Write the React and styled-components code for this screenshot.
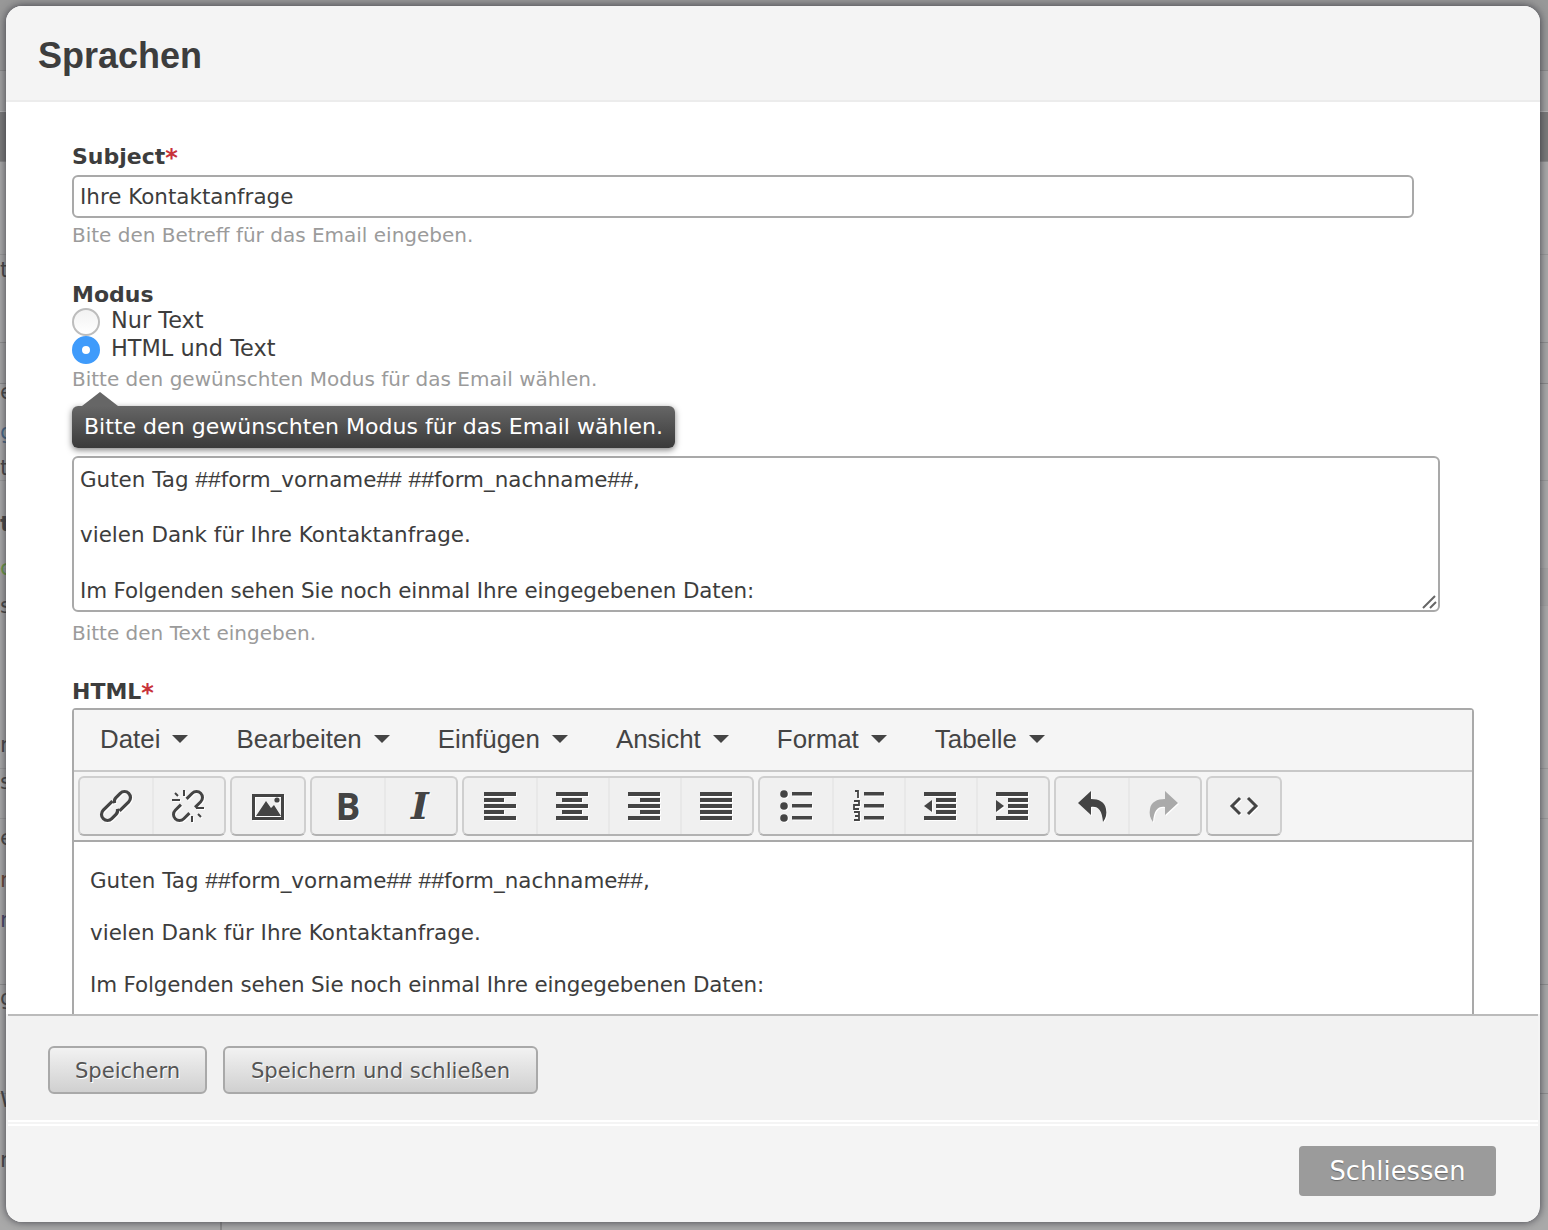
import React from "react";
import styled, { createGlobalStyle } from "styled-components";

const Global = createGlobalStyle`
  html, body { margin: 0; padding: 0; height: 100%; overflow: hidden; }
  body { font-family: "DejaVu Sans", sans-serif; color: #3d3d3d; }
  * { box-sizing: border-box; }
`;

const Page = styled.div`
  position: relative;
  height: 1230px;
  overflow: hidden;
  background: #a9a9a9;
`;
const Bands = styled.div`
  display: flex;
  flex-direction: column;
  height: 100%;
`;
const Band = styled.div`
  flex: none;
  height: ${(p) => p.$h}px;
  background: ${(p) => p.$bg};
  border-bottom: 1px solid ${(p) => p.$line || "transparent"};
`;
const Fragments = styled.div`
  position: absolute;
  left: 0;
  top: 0;
  width: 6px;
  overflow: hidden;
  display: flex;
  flex-direction: column;
`;
const Fragment = styled.div`
  height: ${(p) => p.$h}px;
  font-size: 22px;
  line-height: 28px;
  font-weight: ${(p) => (p.$bold ? 700 : 400)};
  color: ${(p) => p.$c || "#4a4a4a"};
  white-space: nowrap;
`;
const ColumnRule = styled.div`
  position: absolute;
  left: 220px;
  bottom: 0;
  width: 2px;
  height: 10px;
  background: #8a8a8a;
`;

const Modal = styled.div`
  position: absolute;
  left: 6px;
  top: 6px;
  width: 1534px;
  height: 1216px;
  display: flex;
  flex-direction: column;
  background: #f4f4f4;
  border-radius: 16px;
  overflow: hidden;
  box-shadow: 0 0 9px rgba(30, 30, 40, 0.75);
`;
const Header = styled.header`
  flex: none;
  height: 96px;
  padding: 0 32px;
  display: flex;
  align-items: center;
  background: #f4f4f4;
  border-bottom: 2px solid #ececec;
`;
const Title = styled.h1`
  margin: 6px 0 0;
  font: 700 36px/44px "Liberation Sans", Arial, sans-serif;
  color: #3d3d3d;
`;
const Body = styled.main`
  flex: none;
  height: 912px;
  overflow: hidden;
  background: #fff;
  padding: 41px 66px 0;
`;
const Field = styled.div`
  position: relative;
  margin-bottom: ${(p) => p.$mb ?? 32}px;
`;
const Label = styled.label`
  display: block;
  height: 28px;
  font-size: 22px;
  font-weight: 700;
  line-height: 28px;
  margin-bottom: ${(p) => p.$mb ?? 4}px;
  color: #3d3d3d;
`;
const Star = styled.span`
  font-size: 24px;
  line-height: 20px;
  vertical-align: -2px;
  color: #c8323a;
`;
const TextInput = styled.input`
  display: block;
  width: 1342px;
  height: 43px;
  padding: 0 6px;
  border: 2px solid #a9a9a9;
  border-radius: 6px;
  background: #fff;
  outline: none;
  font: 21.45px "DejaVu Sans", sans-serif;
  color: #3d3d3d;
`;
const Help = styled.div`
  height: 28px;
  margin-top: ${(p) => p.$mt ?? 3}px;
  font-size: 20px;
  line-height: 28px;
  color: #9b9b9b;
  white-space: nowrap;
`;
const RadioList = styled.div`
  margin-top: -1px;
`;
const RadioRow = styled.label`
  display: flex;
  align-items: center;
  gap: 11px;
  height: 28px;
  font-size: 22.4px;
  color: #3d3d3d;
`;
const RadioText = styled.span`
  margin-top: -4px;
`;
const RadioInput = styled.input`
  appearance: none;
  flex: none;
  width: 28px;
  height: 28px;
  margin: 0;
  border-radius: 50%;
  border: 2px solid #bdbdbd;
  background: linear-gradient(#f2f2f2, #fff);
  &:checked {
    border: 10px solid #3f9bfb;
    background: #fff;
  }
`;
const Tooltip = styled.div`
  position: absolute;
  z-index: 2;
  left: 0;
  top: 125px;
  height: 42px;
  padding: 0 12px 2px;
  display: flex;
  align-items: center;
  font-size: 22.06px;
  color: #fff;
  white-space: nowrap;
  border-radius: 6px;
  background: linear-gradient(#666, #3a3a3a);
  box-shadow: 0 2px 6px rgba(0, 0, 0, 0.5);
  &::before {
    content: "";
    position: absolute;
    left: 10px;
    top: -14px;
    border-left: 18px solid transparent;
    border-right: 18px solid transparent;
    border-bottom: 14px solid #666;
  }
`;
const TextBox = styled.div`
  position: relative;
  width: 1368px;
  height: 156px;
  padding: 7px 6px 0;
  border: 2px solid #a9a9a9;
  border-radius: 6px;
  overflow: hidden;
  font-size: 21.45px;
  line-height: 28px;
  color: #3d3d3d;
`;
const TextLine = styled.div`
  height: 28px;
  white-space: nowrap;
`;
const Hash = styled.span`
  font-family: "Liberation Sans", sans-serif;
  font-size: 22.8px;
`;
const Tight = styled.span`
  letter-spacing: -0.14px;
`;
const Grip = styled.svg`
  position: absolute;
  right: 1px;
  bottom: 1px;
  width: 16px;
  height: 16px;
  fill: none;
  stroke: #666;
  stroke-width: 2;
`;
const Editor = styled.div`
  width: 1402px;
  border: 2px solid #a9a9a9;
  border-radius: 4px;
  background: #fff;
`;
const MenuBar = styled.div`
  height: 62px;
  padding: 0 0 2px 26px;
  display: flex;
  align-items: center;
  gap: 48px;
  background: #f5f5f5;
  border-bottom: 2px solid #c8c8c8;
`;
const MenuItem = styled.div`
  display: flex;
  align-items: center;
  gap: 12px;
  font: 25.9px/32px "Liberation Sans", Arial, sans-serif;
  color: #444;
`;
const Caret = styled.span`
  width: 0;
  height: 0;
  border-left: 8px solid transparent;
  border-right: 8px solid transparent;
  border-top: 8px solid #444;
`;
const ToolBar = styled.div`
  height: 70px;
  padding: 4px 4px 0;
  display: flex;
  gap: 4px;
  background: #f5f5f5;
  border-bottom: 2px solid #a9a9a9;
`;
const Group = styled.div`
  display: flex;
  height: 60px;
  border: 2px solid #cfcfcf;
  border-bottom-color: #b2b2b2;
  border-radius: 6px;
  background: #f0f0f0;
`;
const ToolButton = styled.div`
  width: 72px;
  display: flex;
  align-items: center;
  justify-content: center;
  & + & {
    box-shadow: inset 2px 0 0 #e8e8e8;
  }
`;
const Icon = styled.svg`
  width: 32px;
  height: 32px;
  overflow: visible;
  fill: ${(p) => p.$c || "#444"};
  filter: drop-shadow(1px 1px 0 #fff);
`;
const BoldGlyph = styled.span`
  font: 700 37px/32px "Open Sans", "Liberation Sans", sans-serif;
  color: #444;
  text-shadow: 1px 1px 0 #fff;
`;
const ItalicGlyph = styled.span`
  font: italic 700 38px/32px "DejaVu Serif", serif;
  color: #444;
  text-shadow: 1px 1px 0 #fff;
`;
const Content = styled.div`
  min-height: 400px;
  padding: 24px 16px 0;
  font-size: 21.45px;
  line-height: 28px;
  color: #3d3d3d;
`;
const Para = styled.p`
  margin: 0 0 24px;
`;
const FormBar = styled.div`
  flex: none;
  height: 108px;
  margin: 0 2px 2px;
  padding: 30px 40px 0;
  display: flex;
  align-items: flex-start;
  gap: 16px;
  background: #f2f2f2;
  border-top: 2px solid #bbb;
  border-bottom: 2px solid #fff;
`;
const FormButton = styled.button`
  width: ${(p) => p.$w}px;
  height: 48px;
  padding: 0;
  border: 2px solid #a9a9a9;
  border-radius: 6px;
  background: linear-gradient(#f2f2f2, #d0d0d0);
  font: 21.1px "DejaVu Sans", sans-serif;
  color: #555;
  text-shadow: 1px 1px 0 #fff;
`;
const Footer = styled.footer`
  flex: 1;
  margin: 0 2px;
  padding: 20px 42px 0 0;
  display: flex;
  justify-content: flex-end;
  align-items: flex-start;
  background: #f4f4f4;
  border-top: 2px solid #fff;
`;
const CloseButton = styled.button`
  width: 197px;
  height: 50px;
  border: 0;
  border-radius: 4px;
  background: #9b9b9b;
  font: 25.75px "DejaVu Sans", sans-serif;
  color: #fff;
  text-shadow: 0 1px 1px rgba(0, 0, 0, 0.35);
`;

const bands = [
  [71, "#989898", "#8a8a8a"],
  [41, "#a2a2a2", "#b5b5b5"],
  [50, "#7b7b7b", "#8b8b8b"],
  [93, "#a9a9a9", "#999"],
  [88, "#a9a9a9", "#8f8f8f"],
  [41, "#a6a6a6", "#8a8a8a"],
  [97, "#a9a9a9", "#999"],
  [88, "#a9a9a9", "#a0a0a0"],
  [37, "#a3a3a3", "#a0a0a0"],
  [163, "#a9a9a9", "#999"],
  [50, "#a9a9a9", "#999"],
  [166, "#a9a9a9", "#8f8f8f"],
  [109, "#a9a9a9", "#8f8f8f"],
  [126, "#a9a9a9"],
];

const fragments = [
  [256, ""],
  [122, "t"],
  [40, "e"],
  [36, "g", "#4a6a8a"],
  [56, "t"],
  [44, "t", null, true],
  [38, "c", "#6d9a4a"],
  [139, "s"],
  [37, "r"],
  [56, "s"],
  [42, "e"],
  [40, "r", "#6a4a3a"],
  [78, "r", "#4a4a6a"],
  [102, "g"],
  [60, "W"],
  [28, "n"],
];

const barPath = (rows) =>
  rows.map(([x, y, w, h = 4]) => `M${x} ${y}h${w}v${h}h-${w}z`).join("");

const ys = [2, 8, 14, 20, 26];
const alignIcon = (xs) => barPath(ys.map((y, i) => [xs[i % 2][0], y, xs[i % 2][1]]));

const LinkIcon = () => (
  <Icon viewBox="0 0 32 32">
    <g transform="rotate(-45 16 16)" fill="none" stroke="#444" strokeWidth="3.2">
      <path d="M17 10H4a6 6 0 0 0 0 12h6a6 6 0 0 0 5-3" />
      <path d="M15 22H28a6 6 0 0 0 0-12h-6a6 6 0 0 0-5 3" />
    </g>
  </Icon>
);
const UnlinkIcon = () => (
  <Icon viewBox="0 0 32 32">
    <g transform="rotate(-45 16 16)" fill="none" stroke="#444" strokeWidth="3">
      <path d="M12 10H4a6 6 0 0 0 0 12h8" />
      <path d="M20 22h8a6 6 0 0 0 0-12h-8" />
    </g>
    <path
      d="M12 0v6M0 10h8M3 3l3 3M20 26v6M24 18h8M26 24l3 3"
      fill="none"
      stroke="#444"
      strokeWidth="2"
    />
  </Icon>
);
const ImageIcon = () => (
  <Icon viewBox="0 0 32 32">
    <path fillRule="evenodd" d="M0 4h32v26H0zM3 7v20h26V7z" />
    <path d="M4 26l10-15 5 7 3-3 7 11z" />
    <circle cx="25" cy="10" r="2.6" />
  </Icon>
);
const BarsIcon = ({ d }) => (
  <Icon viewBox="0 0 32 32">
    <path d={d} />
  </Icon>
);
const BulletIcon = () => (
  <Icon viewBox="0 0 32 32">
    <circle cx="4" cy="4" r="3.8" />
    <circle cx="4" cy="16" r="3.8" />
    <circle cx="4" cy="28" r="3.8" />
    <path d={barPath([[12, 2, 20, 3.5], [12, 14, 20, 3.5], [12, 26, 20, 3.5]])} />
  </Icon>
);
const NumberIcon = () => (
  <Icon viewBox="0 0 32 32">
    <path
      d="M3 1h3v7M2 11h5v4H2v4h5M2 22h5v4H3M7 26v4H2"
      fill="none"
      stroke="#444"
      strokeWidth="1.8"
    />
    <path d={barPath([[12, 2, 20, 3.5], [12, 14, 20, 3.5], [12, 26, 20, 3.5]])} />
  </Icon>
);
const OutdentIcon = () => (
  <Icon viewBox="0 0 32 32">
    <path d={barPath([[0, 2, 32], [12, 8, 20], [12, 14, 20], [12, 20, 20], [0, 26, 32]])} />
    <path d="M0 16l8-6v12z" />
  </Icon>
);
const IndentIcon = () => (
  <Icon viewBox="0 0 32 32">
    <path d={barPath([[0, 2, 32], [12, 8, 20], [12, 14, 20], [12, 20, 20], [0, 26, 32]])} />
    <path d="M8 16l-8-6v12z" />
  </Icon>
);
const UndoIcon = () => (
  <Icon viewBox="0 0 32 32">
    <path d="M15 1L2 13l13 12v-8c7-1 11 3 12 15 3-4 4-8 3-13-1-7-7-10-15-10z" />
  </Icon>
);
const RedoIcon = () => (
  <Icon viewBox="0 0 32 32" $c="#aaa">
    <path d="M17 1l13 12-13 12v-8c-7-1-11 3-12 15-3-4-4-8-3-13 1-7 7-10 15-10z" />
  </Icon>
);
const CodeIcon = () => (
  <Icon viewBox="0 0 32 32">
    <path d="M12 8l-8 8 8 8M20 8l8 8-8 8" fill="none" stroke="#444" strokeWidth="3" />
  </Icon>
);

const menus = ["Datei", "Bearbeiten", "Einfügen", "Ansicht", "Format", "Tabelle"];

const Greeting = () => (
  <>
    Guten Tag <Hash>##</Hash>form_vorname<Hash>##</Hash> <Hash>##</Hash>form_nachname<Hash>##</Hash>,
  </>
);
const thanks = "vielen Dank für Ihre Kontaktanfrage.";
const following = "Im Folgenden sehen Sie noch einmal Ihre eingegebenen Daten:";

const L = [0, 32];
const groups = [
  [<LinkIcon />, <UnlinkIcon />],
  [<ImageIcon />],
  [<BoldGlyph>B</BoldGlyph>, <ItalicGlyph>I</ItalicGlyph>],
  [
    <BarsIcon d={alignIcon([L, [0, 20]])} />,
    <BarsIcon d={alignIcon([L, [6, 20]])} />,
    <BarsIcon d={alignIcon([L, [12, 20]])} />,
    <BarsIcon d={alignIcon([L, L])} />,
  ],
  [<BulletIcon />, <NumberIcon />, <OutdentIcon />, <IndentIcon />],
  [<UndoIcon />, <RedoIcon />],
  [<CodeIcon />],
];

export default function App() {
  return (
    <Page>
      <Global />
      <Bands>
        {bands.map(([h, bg, line], i) => (
          <Band key={i} $h={h} $bg={bg} $line={line} />
        ))}
      </Bands>
      <Fragments>
        {fragments.map(([h, t, c, b], i) => (
          <Fragment key={i} $h={h} $c={c} $bold={b}>
            {t}
          </Fragment>
        ))}
      </Fragments>
      <ColumnRule />
      <Modal>
        <Header>
          <Title>Sprachen</Title>
        </Header>
        <Body>
          <Field>
            <Label>
              Subject<Star>*</Star>
            </Label>
            <TextInput readOnly value="Ihre Kontaktanfrage" />
            <Help>Bite den Betreff für das Email eingeben.</Help>
          </Field>
          <Field>
            <Label $mb={0}>Modus</Label>
            <RadioList>
              <RadioRow>
                <RadioInput type="radio" name="modus" readOnly />
                <RadioText>Nur Text</RadioText>
              </RadioRow>
              <RadioRow>
                <RadioInput type="radio" name="modus" readOnly checked />
                <RadioText>HTML und Text</RadioText>
              </RadioRow>
            </RadioList>
            <Help $mt={1}>Bitte den gewünschten Modus für das Email wählen.</Help>
            <Tooltip>Bitte den gewünschten Modus für das Email wählen.</Tooltip>
          </Field>
          <Field $mb={31}>
            <Label $mb={3} />
            <TextBox>
              <TextLine>
                <Greeting />
              </TextLine>
              <TextLine />
              <TextLine>{thanks}</TextLine>
              <TextLine />
              <TextLine>
                <Tight>{following}</Tight>
              </TextLine>
              <Grip viewBox="0 0 16 16">
                <path d="M2 15L14 3M9 15l6-6" />
              </Grip>
            </TextBox>
            <Help $mt={7}>Bitte den Text eingeben.</Help>
          </Field>
          <Field $mb={0}>
            <Label $mb={2}>
              HTML<Star>*</Star>
            </Label>
            <Editor>
              <MenuBar>
                {menus.map((m) => (
                  <MenuItem key={m}>
                    {m}
                    <Caret />
                  </MenuItem>
                ))}
              </MenuBar>
              <ToolBar>
                {groups.map((g, i) => (
                  <Group key={i}>
                    {g.map((icon, j) => (
                      <ToolButton key={j}>{icon}</ToolButton>
                    ))}
                  </Group>
                ))}
              </ToolBar>
              <Content>
                <Para>
                  <Greeting />
                </Para>
                <Para>{thanks}</Para>
                <Para>
                  <Tight>{following}</Tight>
                </Para>
              </Content>
            </Editor>
          </Field>
        </Body>
        <FormBar>
          <FormButton $w={159}>Speichern</FormButton>
          <FormButton $w={315}>Speichern und schließen</FormButton>
        </FormBar>
        <Footer>
          <CloseButton>Schliessen</CloseButton>
        </Footer>
      </Modal>
    </Page>
  );
}
